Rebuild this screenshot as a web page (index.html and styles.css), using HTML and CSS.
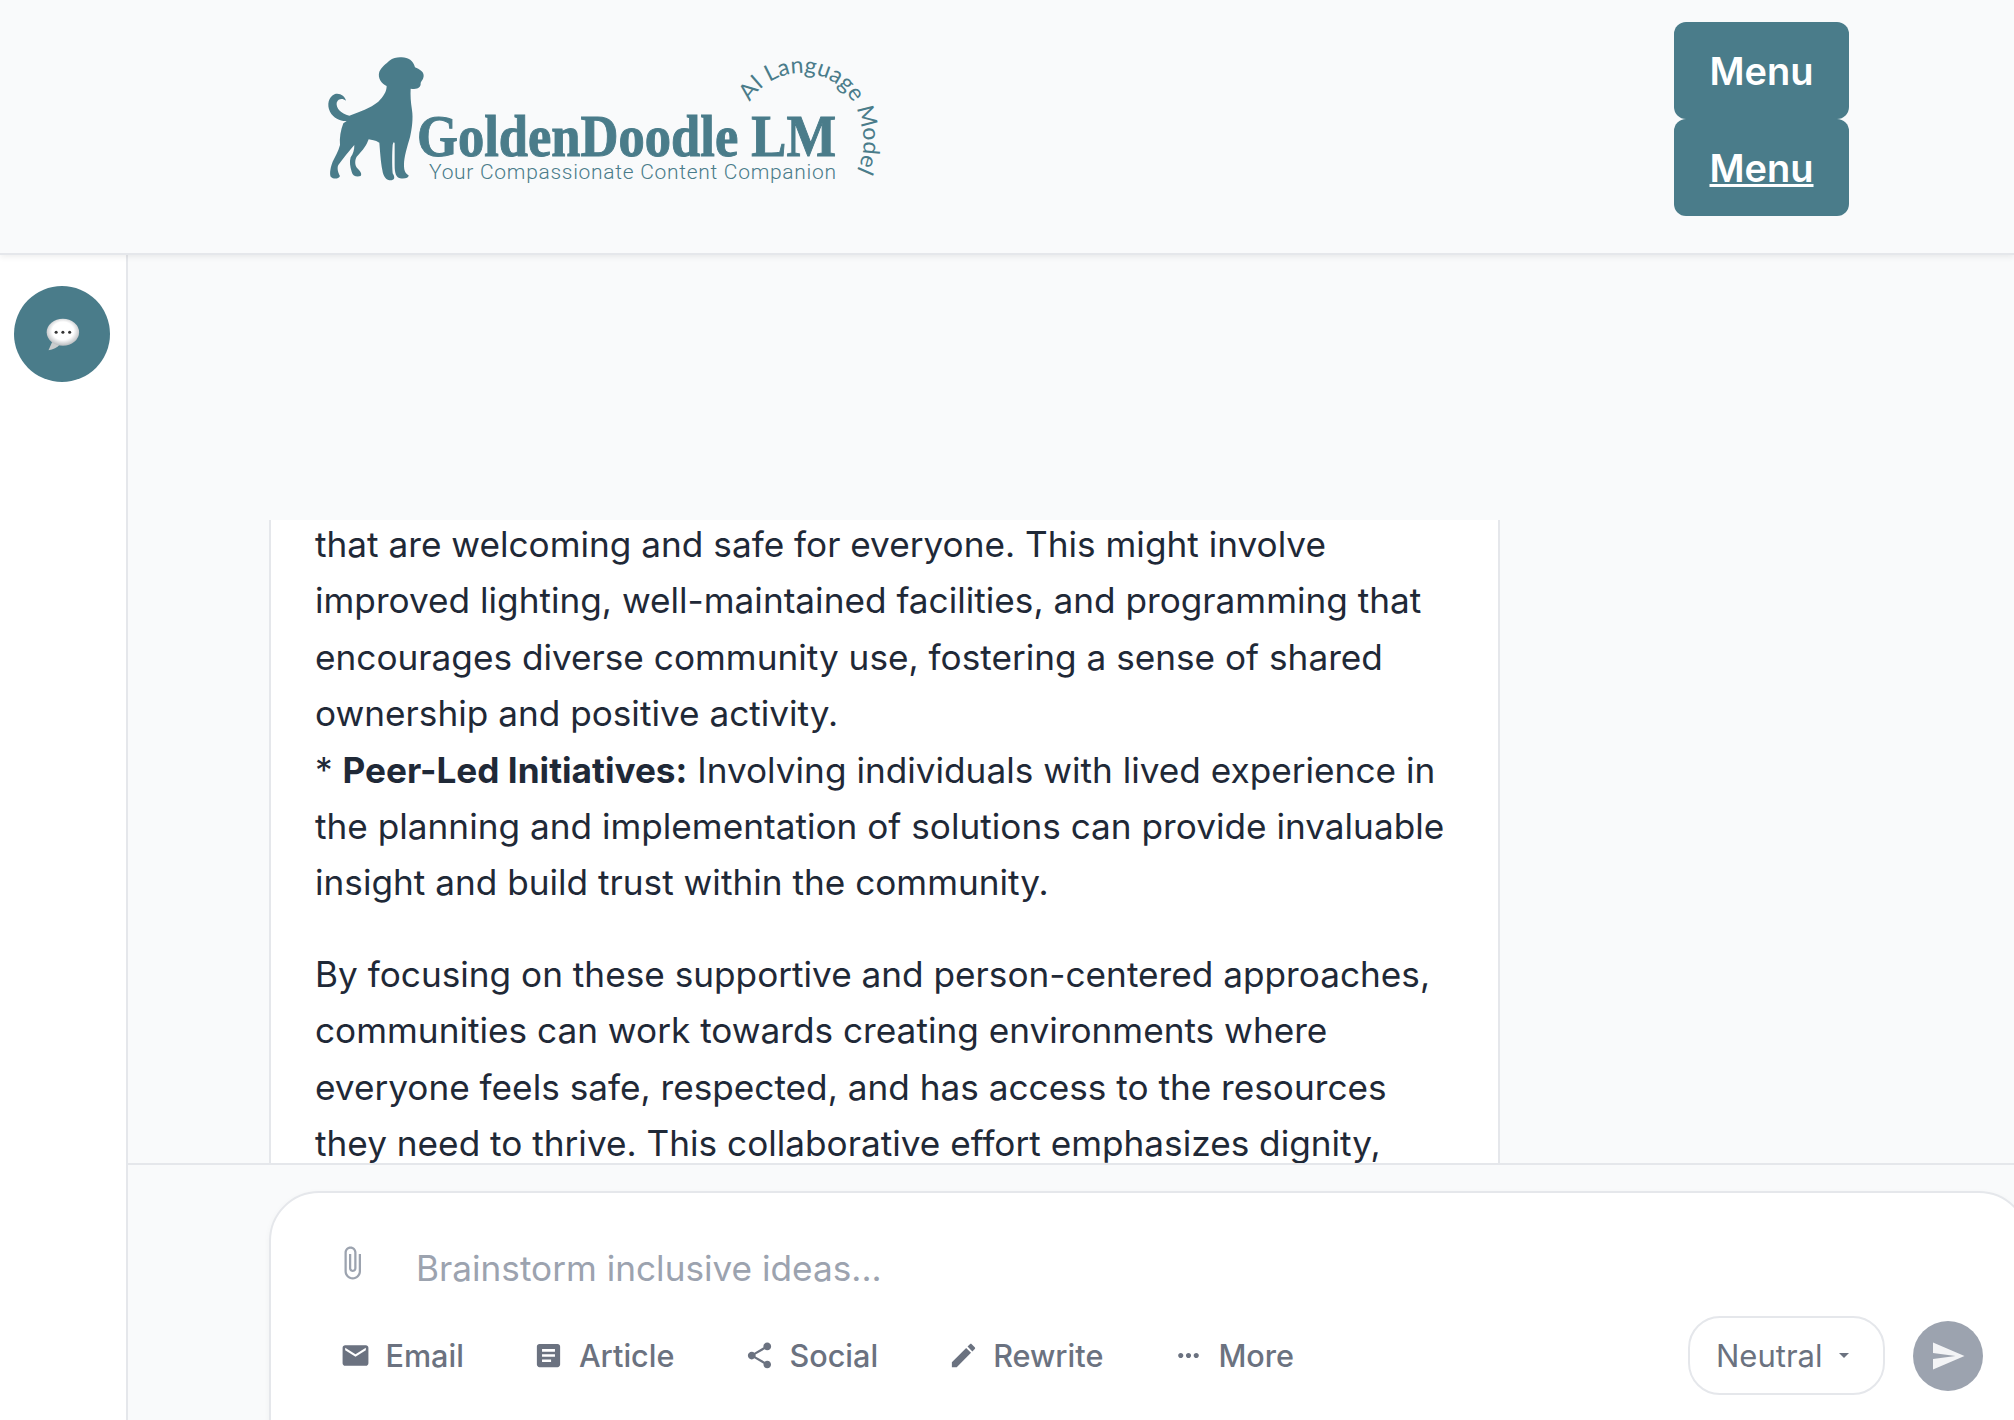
FILE: index.html
```html
<!DOCTYPE html>
<html lang="en">
<head>
    <meta charset="UTF-8">
    <meta name="viewport" content="width=device-width, initial-scale=1.0">
    <link rel="stylesheet" href="styles.css">
    <title>GoldenDoodle LM</title>
</head>
<body>
    <header class="topbar">
        <svg class="logo" viewBox="0 0 570 140" role="img" aria-label="GoldenDoodle LM">
            <defs>
                <path id="logoArc" d="M430 52 A60 60 0 0 1 540 70 A66 66 0 0 1 528 134"></path>
            </defs>
            <g transform="scale(0.3333)">
                <path class="logo-mark" d="M240 22 C262 20 280 30 285 52 C298 58 312 65 311 78 C310 90 303 93 302 100 C303 112 293 120 272 116 C271 135 272 155 276 180 C280 205 276 235 270 262 C262 290 252 320 252 345 C252 360 255 370 266 376 C266 384 255 387 240 385 C228 382 224 370 224 345 L224 280 C222 275 220 275 218 285 C216 310 216 345 218 370 C224 380 226 388 215 391 C200 392 190 382 187 360 C182 335 180 300 178 278 C165 270 155 270 146 268 C140 285 130 300 110 320 C105 328 103 345 112 355 C120 362 127 372 122 378 C110 382 98 378 95 365 C90 350 88 335 92 322 C100 310 103 300 103 285 C90 300 70 325 55 345 C50 355 55 370 60 378 C55 388 40 388 32 380 C28 370 32 350 38 335 C45 320 55 305 60 285 C58 265 62 240 70 220 L80 213 C65 215 40 205 30 185 C20 165 25 140 45 132 C60 128 75 138 78 152 C68 145 55 145 50 158 C48 175 62 190 88 197 C120 185 150 175 175 155 C190 140 200 125 200 108 C185 100 172 85 178 65 C185 50 200 40 208 32 C218 25 230 22 240 22 Z"></path>
            </g>
            <text class="logo-name" x="97" y="106" textLength="419" lengthAdjust="spacingAndGlyphs">GoldenDoodle LM</text>
            <text class="logo-tag" x="109" y="129" textLength="407" lengthAdjust="spacing">Your Compassionate Content Companion</text>
            <text class="logo-arc"><textPath href="#logoArc">AI Language Model</textPath></text>
        </svg>
        <nav class="menu-stack">
            <div class="menu-btn">Menu</div>
            <a class="menu-btn menu-link" href="#">Menu</a>
        </nav>
    </header>

    <div class="app">
        <aside class="sidebar">
            <button class="chat-btn" aria-label="Chat">
                <svg class="chat-emoji" viewBox="0 0 40 40">
                    <defs>
                        <radialGradient id="bubbleFill" cx="50%" cy="45%" r="55%">
                            <stop offset="60%" stop-color="#ffffff"></stop>
                            <stop offset="100%" stop-color="#b9bcbf"></stop>
                        </radialGradient>
                    </defs>
                    <path d="M9 29 L5 38 C10 37 15 35 18 31 Z" fill="#c9cccd"></path>
                    <ellipse cx="21" cy="18" rx="18" ry="15" fill="url(#bubbleFill)"></ellipse>
                    <circle cx="13.500" cy="18" r="1.700" fill="#333"></circle>
                    <circle cx="21" cy="18" r="1.700" fill="#333"></circle>
                    <circle cx="28.500" cy="18" r="1.700" fill="#333"></circle>
                </svg>
            </button>
        </aside>

        <main class="main">
            <div class="top-space"></div>

            <section class="messages">
                <article class="reply">
                    <p>that are welcoming and safe for everyone. This might involve<br>
                    improved lighting, well-maintained facilities, and programming that<br>
                    encourages diverse community use, fostering a sense of shared<br>
                    ownership and positive activity.<br>
                    * <strong>Peer-Led Initiatives:</strong> Involving individuals with lived experience in<br>
                    the planning and implementation of solutions can provide invaluable<br>
                    insight and build trust within the community.</p>
                    <p>By focusing on these supportive and person-centered approaches,<br>
                    communities can work towards creating environments where<br>
                    everyone feels safe, respected, and has access to the resources<br>
                    they need to thrive. This collaborative effort emphasizes dignity,</p>
                </article>
            </section>

            <section class="composer">
                <div class="composer-card">
                    <div class="prompt-row">
                        <svg class="attach-icon" viewBox="0 0 24 24"><path d="M16.5 6v11.5c0 2.21-1.79 4-4 4s-4-1.79-4-4V5c0-1.38 1.12-2.5 2.500-2.500s2.500 1.120 2.500 2.500v10.500c0 .55-.45 1-1 1s-1-.45-1-1V6H10v9.500c0 1.380 1.120 2.500 2.500 2.500s2.500-1.120 2.500-2.500V5c0-2.210-1.790-4-4-4S7 2.790 7 5v12.500c0 3.040 2.460 5.500 5.500 5.500s5.500-2.460 5.500-5.500V6h-1.500z"></path></svg>
                        <div class="prompt-text">Brainstorm inclusive ideas...</div>
                    </div>
                    <div class="tool-row">
                        <div class="tools">
                            <div class="tool">
                                <svg class="tool-icon" viewBox="0 0 24 24"><path d="M20 4H4c-1.100 0-1.990.9-1.990 2L2 18c0 1.100.9 2 2 2h16c1.100 0 2-.9 2-2V6c0-1.100-.9-2-2-2zm0 4l-8 5-8-5V6l8 5 8-5v2z"></path></svg>
                                <span>Email</span>
                            </div>
                            <div class="tool">
                                <svg class="tool-icon" viewBox="0 0 24 24"><path d="M19 3H5c-1.100 0-2 .9-2 2v14c0 1.100.9 2 2 2h14c1.100 0 2-.9 2-2V5c0-1.100-.9-2-2-2zm-5 14H7v-2h7v2zm3-4H7v-2h10v2zm0-4H7V7h10v2z"></path></svg>
                                <span>Article</span>
                            </div>
                            <div class="tool">
                                <svg class="tool-icon" viewBox="0 0 24 24"><path d="M18 16.080c-.76 0-1.440.3-1.960.77L8.910 12.700c.05-.23.09-.46.09-.7s-.04-.47-.09-.7l7.050-4.110c.54.5 1.250.81 2.040.81 1.660 0 3-1.340 3-3s-1.340-3-3-3-3 1.340-3 3c0 .24.04.47.09.7L8.040 9.810C7.500 9.310 6.790 9 6 9c-1.660 0-3 1.340-3 3s1.340 3 3 3c.79 0 1.500-.31 2.040-.81l7.120 4.160c-.05.21-.08.43-.08.65 0 1.610 1.310 2.920 2.920 2.920s2.920-1.310 2.920-2.920-1.310-2.920-2.920-2.920z"></path></svg>
                                <span>Social</span>
                            </div>
                            <div class="tool">
                                <svg class="tool-icon" viewBox="0 0 24 24"><path d="M3 17.250V21h3.750L17.810 9.940l-3.750-3.750L3 17.250zM20.710 7.040c.39-.39.39-1.020 0-1.410l-2.340-2.340c-.39-.39-1.020-.39-1.410 0l-1.830 1.830 3.750 3.750 1.830-1.830z"></path></svg>
                                <span>Rewrite</span>
                            </div>
                            <div class="tool">
                                <svg class="tool-icon" viewBox="0 0 24 24"><path d="M6 10c-1.100 0-2 .9-2 2s.9 2 2 2 2-.9 2-2-.9-2-2-2zm12 0c-1.100 0-2 .9-2 2s.9 2 2 2 2-.9 2-2-.9-2-2-2zm-6 0c-1.100 0-2 .9-2 2s.9 2 2 2 2-.9 2-2-.9-2-2-2z"></path></svg>
                                <span>More</span>
                            </div>
                        </div>
                        <div class="tone-pill">
                            <span>Neutral</span>
                            <span class="caret"></span>
                        </div>
                        <button class="send-btn" aria-label="Send">
                            <svg class="send-icon" viewBox="0 0 24 24"><path d="M2.010 21L23 12 2.010 3 2 10l15 2-15 2z"></path></svg>
                        </button>
                    </div>
                </div>
            </section>
        </main>
    </div>
</body>
</html>
```

FILE: styles.css
```css
html, body {
    height: 100%;
}

body {
    margin: 0;
    height: 1420px;
    overflow: hidden;
    display: flex;
    flex-direction: column;
    font-family: 'Inter', sans-serif;
    color: #1f2937;
    background-color: #f9fafb;
}

/* header */
.topbar {
    height: 253px;
    flex-shrink: 0;
    display: flex;
    justify-content: space-between;
    align-items: flex-start;
    padding: 0 165px 0 320px;
    background-color: #f9fafb;
    border-bottom: 2px solid #e5e7eb;
    box-shadow: 0 2px 6px rgba(0, 0, 0, 0.07);
    position: relative;
    z-index: 2;
}

.logo {
    width: 570px;
    height: 140px;
    margin-top: 50px;
    overflow: visible;
}

.logo-mark {
    fill: #4a7c8a;
}

.logo-name {
    font-family: 'Liberation Serif', serif;
    font-weight: 700;
    font-size: 60px;
    fill: #4a7c8a;
    stroke: #4a7c8a;
    stroke-width: 1px;
}

.logo-tag {
    font-family: 'Roboto', sans-serif;
    font-size: 21px;
    font-weight: 300;
    fill: #4a7c8a;
}

.logo-arc {
    font-family: 'Lato', sans-serif;
    font-size: 23px;
    fill: #4a7c8a;
}

.menu-stack {
    display: flex;
    flex-direction: column;
    margin-top: 22px;
}

.menu-btn {
    width: 175px;
    height: 97px;
    display: flex;
    align-items: center;
    justify-content: center;
    border-radius: 12px;
    background-color: #4a7c8a;
    color: #fff;
    font-size: 38px;
    font-weight: 600;
}

.menu-link {
    text-decoration: underline;
}

/* page body */
.app {
    flex: 1;
    display: flex;
    min-height: 0;
}

.sidebar {
    width: 126px;
    flex-shrink: 0;
    padding-top: 31px;
    background-color: #fff;
    border-right: 2px solid #e5e7eb;
}

.chat-btn {
    width: 96px;
    height: 96px;
    margin-left: 14px;
    padding: 0;
    display: flex;
    align-items: center;
    justify-content: center;
    border: none;
    border-radius: 50%;
    background-color: #4a7c8a;
}

.chat-emoji {
    width: 36px;
    height: 36px;
}

.main {
    flex: 1;
    min-width: 0;
    display: flex;
    flex-direction: column;
}

.top-space {
    height: 265px;
    flex-shrink: 0;
}

.messages {
    flex: 1;
    min-height: 0;
    overflow: hidden;
    display: flex;
    flex-direction: column;
    padding-left: 141px;
}

.reply {
    flex: 1;
    width: 1231px;
    box-sizing: border-box;
    margin-top: -4px;
    padding: 0 44px;
    background-color: #fff;
    border-left: 2px solid #e5e7eb;
    border-right: 2px solid #e5e7eb;
    font-size: 35.200px;
    line-height: 56.400px;
}

.reply p {
    margin: 0 0 35px;
}

.reply strong {
    font-weight: 700;
}

/* composer */
.composer {
    flex-shrink: 0;
    height: 257px;
    box-sizing: border-box;
    padding: 26px 0 0 141px;
    overflow: hidden;
    background-color: #f9fafb;
    border-top: 2px solid #e5e7eb;
}

.composer-card {
    width: 1760px;
    height: 300px;
    box-sizing: border-box;
    padding: 47px 44px 0 69px;
    background-color: #fff;
    border: 2px solid #e5e7eb;
    border-radius: 50px;
    box-shadow: 0 2px 6px rgba(0, 0, 0, 0.04);
}

.prompt-row {
    display: flex;
    align-items: center;
    gap: 46px;
    height: 56px;
    margin-left: -6px;
}

.attach-icon {
    width: 36px;
    height: 36px;
    margin-top: -10px;
    fill: #9ca3af;
}

.prompt-text {
    font-size: 35.200px;
    color: #9ca3af;
}

.tool-row {
    display: flex;
    align-items: center;
    margin-top: 20px;
}

.tools {
    flex: 1;
    display: flex;
    align-items: center;
    gap: 69.500px;
}

.tool {
    display: flex;
    align-items: center;
    gap: 14.500px;
    font-size: 30.600px;
    font-weight: 500;
    color: #6b7280;
}

.tool-icon {
    width: 31px;
    height: 31px;
    fill: #6b7280;
}

.tone-pill {
    width: 197px;
    height: 79px;
    box-sizing: border-box;
    display: flex;
    align-items: center;
    gap: 16px;
    padding-left: 26px;
    border: 2px solid #e5e7eb;
    border-radius: 32px;
    font-size: 31px;
    color: #6b7280;
}

.caret {
    width: 0;
    height: 0;
    border-left: 5px solid transparent;
    border-right: 5px solid transparent;
    border-top: 5px solid #6b7280;
}

.send-btn {
    width: 70px;
    height: 70px;
    margin-left: 28px;
    padding: 0;
    display: flex;
    align-items: center;
    justify-content: center;
    border: none;
    border-radius: 50%;
    background-color: #9ca3af;
}

.send-icon {
    width: 36px;
    height: 36px;
    fill: #f3f4f6;
}
```
